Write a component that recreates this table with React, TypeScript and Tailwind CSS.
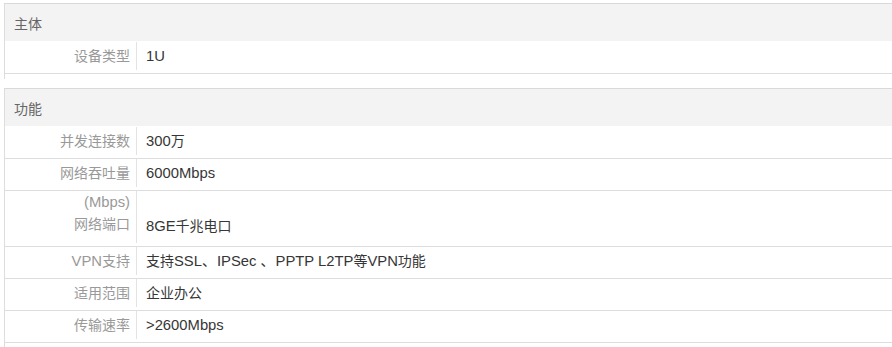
import React from "react";

type Row = { label: string[]; value: string; tall?: boolean };
type Section = { title: string; rows: Row[] };

const sections: Section[] = [
  {
    title: "主体",
    rows: [{ label: ["设备类型"], value: "1U" }],
  },
  {
    title: "功能",
    rows: [
      { label: ["并发连接数"], value: "300万" },
      { label: ["网络吞吐量"], value: "6000Mbps" },
      { label: ["(Mbps)", "网络端口"], value: "8GE千兆电口", tall: true },
      { label: ["VPN支持"], value: "支持SSL、IPSec 、PPTP L2TP等VPN功能" },
      { label: ["适用范围"], value: "企业办公" },
      { label: ["传输速率"], value: ">2600Mbps" },
    ],
  },
];

const CJK = /([\u3000-\u303f\u4e00-\u9fff\uff00-\uffef]+)/;

// Latin runs are set a touch larger than CJK runs so both read at the same weight;
// the ideographic comma keeps its full-width cell.
function Mixed({ text }: { text: string }) {
  const parts = text.split(CJK).filter(Boolean);
  return (
    <>
      {parts.map((p, i) => {
        if (!CJK.test(p)) {
          return (
            <span key={i} className="text-[14.8px] whitespace-pre">
              {p}
            </span>
          );
        }
        const pieces = p.split(/(、)/).filter(Boolean);
        return (
          <span key={i} className="text-[14px]">
            {pieces.map((c, j) =>
              c === "、" ? (
                <span key={j} className="inline-block w-[15px] text-left">
                  、
                </span>
              ) : (
                <React.Fragment key={j}>{c}</React.Fragment>
              )
            )}
          </span>
        );
      })}
    </>
  );
}

function SpecRow({ row, first }: { row: Row; first: boolean }) {
  if (row.tall) {
    return (
      <div className="flex border-b border-[#dddddd]">
        <div className="w-[132px] shrink-0 border-r border-[#e3e3e3] mb-[3px] h-[52px] pr-[6px] text-right text-[#999999] leading-[22px]">
          {row.label.map((l, i) => (
            <div key={i} className="h-[22px]">
              <Mixed text={l} />
            </div>
          ))}
        </div>
        <div className="flex items-end pl-[9px] pb-[9px] text-[#363636] leading-[22px]">
          <Mixed text={row.value} />
        </div>
      </div>
    );
  }
  return (
    <div className="flex border-b border-[#dddddd]">
      <div
        className={`w-[132px] shrink-0 border-r border-[#e3e3e3] mb-[3px] h-[28px] flex items-center justify-end pr-[6px] text-[#999999] leading-[22px] ${
          first ? "mt-px" : ""
        }`}
      >
        <Mixed text={row.label[0]} />
      </div>
      <div
        className={`flex items-center h-[28px] pl-[9px] text-[#363636] leading-[22px] ${
          first ? "mt-px" : ""
        }`}
      >
        <Mixed text={row.value} />
      </div>
    </div>
  );
}

export default function App() {
  return (
    <div
      className="w-[892px] h-[347px] overflow-hidden bg-white pl-1 pt-[3px]"
      style={{ fontFamily: '"Liberation Sans", Arial, "Noto Sans CJK SC", sans-serif' }}
    >
      {sections.map((s, si) => (
        <div
          key={s.title}
          className={`border-l border-[#dddddd] ${si === 0 ? "pb-[5px] mb-[9px]" : "pb-[10px]"}`}
        >
          <div className="h-[38px] border-t border-[#d9d9d9] bg-[#f3f3f3] pl-[9px] pt-[3px] flex items-center text-[#666666] leading-[22px]">
            <Mixed text={s.title} />
          </div>
          {s.rows.map((r, ri) => (
            <SpecRow key={ri} row={r} first={ri === 0} />
          ))}
        </div>
      ))}
    </div>
  );
}
